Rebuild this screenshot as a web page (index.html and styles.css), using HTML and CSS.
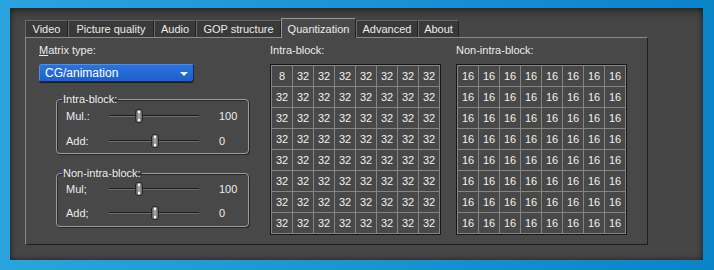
FILE: index.html
```html
<!DOCTYPE html>
<html>
<head>
<meta charset="utf-8">
<link rel="stylesheet" href="styles.css">
</head>
<body>
<div class="window">
  <div class="tabs">
    <div class="tab t-video">Video</div>
    <div class="tab t-pq">Picture quality</div>
    <div class="tab t-audio">Audio</div>
    <div class="tab t-gop">GOP structure</div>
    <div class="tab t-quant active">Quantization</div>
    <div class="tab t-adv">Advanced</div>
    <div class="tab t-about">About</div>
  </div>
  <div class="panel">
    <div class="left">
      <div class="label"><u>M</u>atrix type:</div>
      <div class="select"><span>CG/animation</span><span class="arrow"></span></div>
      <fieldset class="group g1">
        <legend>Intra-block:</legend>
        <div class="row"><span class="rl">Mul.:</span><div class="slider"><div class="thumb" style="left:26px"></div></div><span class="val">100</span></div>
        <div class="row"><span class="rl">Add:</span><div class="slider"><div class="thumb" style="left:42px"></div></div><span class="val">0</span></div>
      </fieldset>
      <fieldset class="group g2">
        <legend>Non-intra-block:</legend>
        <div class="row"><span class="rl">Mul;</span><div class="slider"><div class="thumb" style="left:26px"></div></div><span class="val">100</span></div>
        <div class="row"><span class="rl">Add;</span><div class="slider"><div class="thumb" style="left:42px"></div></div><span class="val">0</span></div>
      </fieldset>
    </div>
    <div class="matrix m1">
      <div class="label">Intra-block:</div>
      <div class="grid" id="g1"></div>
    </div>
    <div class="matrix m2">
      <div class="label">Non-intra-block:</div>
      <div class="grid" id="g2"></div>
    </div>
  </div>
</div>
<script>
(function(){
  function fill(id, first, rest){
    var g=document.getElementById(id), h='';
    for(var i=0;i<64;i++){ h+='<div class="cell">'+(i===0?first:rest)+'</div>'; }
    g.innerHTML=h;
  }
  fill('g1','8','32');
  fill('g2','16','16');
})();
</script>
</body>
</html>
```
FILE: styles.css
```css
html, body { margin: 0; padding: 0; }
body {
  width: 714px; height: 270px; overflow: hidden;
  background: linear-gradient(90deg, #2aa4df 0%, #1b93d4 50%, #0a83cb 100%);
  font-family: "Liberation Sans", Arial, sans-serif;
  font-size: 11px;
  color: #ececec;
}
.window {
  position: relative;
  margin: 8px 0 0 10px;
  width: 693px; height: 252px;
  background: #464646;
  box-shadow: inset 0 0 6px rgba(0,0,0,0.55), inset 0 10px 14px -8px rgba(0,0,0,0.35);
  box-sizing: border-box;
  padding: 9px 0 0 15px;
}
.tabs { display: flex; height: 20px; align-items: flex-end; }
.tab {
  height: 17px; line-height: 16px;
  text-align: center;
  background: #393939;
  border: 1px solid #6a6a6a; border-bottom: none; border-right-color: #222;
  box-sizing: border-box;
}
.t-video { width: 43px; }
.t-pq { width: 86px; }
.t-audio { width: 42px; }
.t-gop { width: 85px; }
.t-quant { width: 75px; }
.t-adv { width: 62px; }
.t-about { width: 41px; }
.tab.active {
  height: 20px; line-height: 21px;
  background: #484848;
  border-color: #9a9a9a; border-right-color: #222;
  position: relative; z-index: 2;
  margin-bottom: -1px;
}
.panel {
  width: 623px; height: 208px;
  box-sizing: border-box;
  background: #484848;
  border: 1px solid #8a8a8a; border-right-color: #1e1e1e; border-bottom-color: #1e1e1e;
  display: flex;
  padding: 5px 0 0 13px;
}
.label { height: 14px; line-height: 14px; margin-bottom: 7px; }
.left { width: 210px; display: flex; flex-direction: column; }
.select {
  width: 155px; height: 18px; box-sizing: border-box;
  background: linear-gradient(#2c72de, #1c60cc);
  border: 1px solid #4f8fe8; border-bottom-color: #0c2f6a; border-right-color: #0c2f6a;
  border-radius: 3px;
  color: #fff; font-size: 12px;
  display: flex; align-items: center; justify-content: space-between;
  padding: 0 5px 0 5px;
  box-shadow: 0 1px 0 #1a1a1a;
}
.arrow {
  width: 0; height: 0;
  border-left: 4px solid transparent; border-right: 4px solid transparent;
  border-top: 4px solid #fff; margin-top: 2px;
}
.group {
  margin: 0 0 0 17px;
  width: 193px; box-sizing: border-box;
  border: 1px solid #9c9c9c;
  border-radius: 4px;
  box-shadow: 1px 1px 0 #262626, inset 1px 1px 0 #2a2a2a;
  padding: 0 0 0 9px;
}
.g1 { margin-top: 11px; height: 61px; }
.g2 { margin-top: 13px; height: 60px; }
.g2 .row { height: 24px; }
.group legend { padding: 0 1px; margin-left: -4px; line-height: 13px; color: #f0f0f0; }
.row { display: flex; align-items: center; height: 25px; }
.group legend + .row { margin-top: -3px; }
.rl { width: 43px; }
.slider {
  position: relative;
  width: 90px; height: 1px;
  background: #1c1c1c;
  border-bottom: 1px solid #6e6e6e;
}
.thumb {
  position: absolute; top: -6px;
  width: 6px; height: 12px;
  border-radius: 3px;
  background: linear-gradient(90deg, #5a5a5a, #b4b4b4 50%, #5a5a5a);
  border: 1px solid #2a2a2a;
}
.thumb::before, .thumb::after {
  content: ""; position: absolute; left: 2px; width: 2px; height: 2px; background: #fff;
}
.thumb::before { top: 1px; }
.thumb::after { bottom: 1px; }
.val { margin-left: 20px; }
.matrix { display: flex; flex-direction: column; }
.m1 { margin-left: 21px; }
.m2 { margin-left: 15px; }
.grid {
  display: grid;
  grid-template-columns: repeat(8, 20px);
  grid-auto-rows: 20px;
  gap: 1px;
  padding: 1px;
  background: #858585;
  border: 1px solid #161616;
  width: max-content;
}
.cell {
  background: #484848;
  text-align: center; line-height: 20px;
  color: #f2f2f2; font-size: 11px;
}
```
